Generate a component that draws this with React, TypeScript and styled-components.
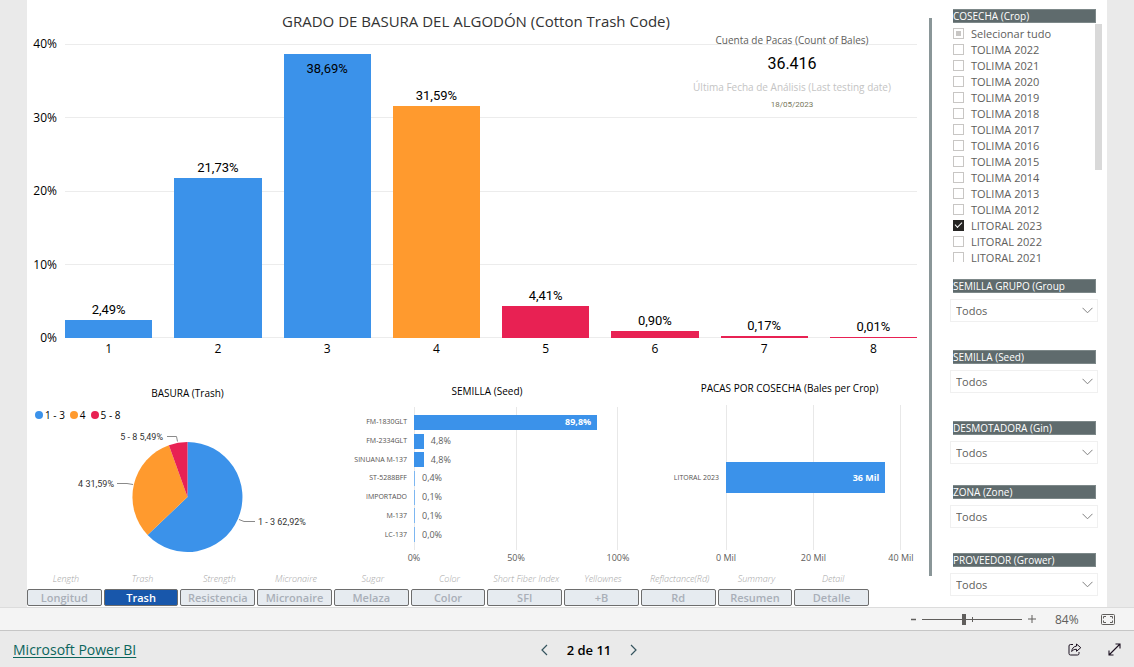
import React, { useEffect, useRef } from "react";
import styled, { createGlobalStyle, css } from "styled-components";

const ui = '"Open Sans", "Noto Sans", sans-serif';
const din = 'Roboto, "Liberation Sans", sans-serif';
const blue = "#3b92ea";
const orange = "#ff9a2e";
const red = "#e82153";

const GlobalStyle = createGlobalStyle`
  *, *::before, *::after { box-sizing: border-box; }
  body { margin: 0; background: #eaeaea; font-family: ${ui}; font-size: 11px; color: #000; }
  button, input, select { font: inherit; margin: 0; }
  h1, h2, p, ul { margin: 0; padding: 0; font-weight: 400; }
`;

const Shell = styled.div`
  display: flex;
  flex-direction: column;
  min-height: 100vh;
`;

const Report = styled.main`
  display: flex;
  flex: 1;
  margin: 0 27px;
  background: #fff;
`;

const Charts = styled.div`
  position: relative;
  display: flex;
  flex: 1;
  flex-direction: column;
  min-width: 0;
`;

const Divider = styled.div`
  width: 3px;
  margin: 18px 18px 31px 4px;
  background: #8a9698;
`;

const Title = styled.h1`
  height: 44px;
  padding-top: 11px;
  font-size: 15px;
  line-height: 20px;
  text-align: center;
  color: #333;
`;

const ColumnChart = styled.section`
  display: grid;
  grid-template-columns: 30px 1fr;
  column-gap: 8px;
  margin-right: 8px;
`;

const YAxis = styled.div`
  display: flex;
  flex-direction: column;
  justify-content: space-between;
  height: 310px;
  margin: -8px 0;
  font-size: 12px;
  line-height: 16px;
  text-align: right;
`;

const Plot = styled.div`
  display: grid;
  height: 294px;
`;

const GridRows = styled.div`
  display: flex;
  flex-direction: column;
  justify-content: space-between;
  grid-area: 1 / 1;

  i { height: 1px; background: #ececec; }
`;

const Columns = styled.div`
  display: grid;
  grid-area: 1 / 1;
  grid-template-columns: repeat(8, 1fr);
  column-gap: 22px;
`;

const Column = styled.div`
  display: flex;
  flex-direction: column;
  justify-content: flex-end;
  height: 294px;
  text-align: center;
`;

const ColumnValue = styled.span`
  font-family: ${din};
  font-size: 13px;
  line-height: 16px;
  padding-bottom: 2px;
`;

const ColumnBar = styled.div<{ $color: string; $inside?: boolean; $min: number }>`
  flex: none;
  min-height: ${(p) => p.$min}px;
  padding-top: ${(p) => (p.$inside ? 7 : 0)}px;
  background: ${(p) => p.$color};
`;

const Categories = styled(Columns)`
  grid-area: 2 / 2;
  font-size: 12px;
  line-height: 16px;
  padding-top: 3px;
  text-align: center;
`;

const Summary = styled.section`
  position: absolute;
  top: 32px;
  right: 33px;
  width: 200px;
  text-align: center;
`;

const SummaryLabel = styled.p<{ $faint?: boolean }>`
  font-size: 10px;
  line-height: 16px;
  color: ${(p) => (p.$faint ? "#c4c4c4" : "#605e5c")};
`;

const SummaryCount = styled.p`
  padding: 5px 0;
  font-family: ${din};
  font-size: 16px;
  line-height: 21px;
  color: #000;
`;

const SummaryDate = styled.p`
  padding-top: 2px;
  font-family: ${din};
  font-size: 8px;
  line-height: 16px;
  color: #77775a;
`;

const LowerRow = styled.div`
  display: grid;
  grid-template-columns: 321fr 264fr 313fr;
  margin-top: 24px;
`;

const Panel = styled.section`
  min-width: 0;
`;

const PanelTitle = styled.h2<{ $top: number; $left?: number }>`
  padding-top: ${(p) => p.$top}px;
  padding-left: ${(p) => p.$left ?? 0}px;
  font-size: 10px;
  line-height: 14px;
  text-align: center;
`;

const Legend = styled.ul`
  display: flex;
  gap: 5px;
  padding: 8px 8px 0;
  list-style: none;
  font-size: 10px;
  line-height: 14px;
`;

const LegendItem = styled.li<{ $color: string }>`
  display: flex;
  align-items: center;
  gap: 2px;

  &::before {
    content: "";
    width: 8px;
    height: 8px;
    border-radius: 50%;
    background: ${(p) => p.$color};
  }
`;

const Pie = styled.svg`
  display: block;
  width: 320px;
  height: 140px;

  text { font-family: ${din}; font-size: 9px; fill: #333; }
  polyline { fill: none; stroke: #8a8a8a; }
`;

const BarChart = styled.div<{ $labels: number; $gap: number; $right: number; $top: number }>`
  display: grid;
  grid-template-columns: ${(p) => p.$labels}px 1fr;
  column-gap: ${(p) => p.$gap}px;
  margin: ${(p) => p.$top}px ${(p) => p.$right}px 0 0;
`;

const RowLabels = styled.div<{ $inset: number }>`
  display: grid;
  padding: ${(p) => p.$inset}px 0;
  align-items: center;
  font-size: 7px;
  line-height: 10px;
  text-align: right;
  white-space: nowrap;
  color: #55524f;
`;

const BarPlot = styled.div<{ $height: number }>`
  display: grid;
  height: ${(p) => p.$height}px;
`;

const GridColumns = styled.div`
  display: flex;
  justify-content: space-between;
  grid-area: 1 / 1;

  i { width: 1px; background: #e8e8e8; }
`;

const Bars = styled.div<{ $inset: number }>`
  display: grid;
  grid-area: 1 / 1;
  padding: ${(p) => p.$inset}px 0;
  align-items: center;
`;

const BarRow = styled.div`
  display: flex;
  align-items: center;
  gap: 7px;
  font-size: 9px;
  line-height: 14px;
  color: #605e5c;
`;

const Bar = styled.div<{ $height: number; $faint?: boolean }>`
  display: flex;
  align-items: center;
  justify-content: flex-end;
  height: ${(p) => p.$height}px;
  min-width: 1px;
  padding-right: 6px;
  background: ${(p) => (p.$faint ? "#7db7f1" : blue)};
  font-weight: 700;
  color: #fff;
`;

const ShortBar = styled(Bar)`
  padding: 0;
`;

const XAxis = styled.div`
  display: flex;
  grid-column: 2;
  justify-content: space-between;
  margin: 0 -20px;
  padding-top: 1px;
  font-size: 9px;
  line-height: 14px;
  color: #605e5c;

  span { width: 40px; text-align: center; }
`;

const PageTabs = styled.nav`
  display: grid;
  grid-template-columns: repeat(11, 1fr);
  column-gap: 2px;
  margin: auto 56px 1px 0;
`;

const PageTab = styled.div`
  display: flex;
  flex-direction: column;
  min-width: 0;
  text-align: center;
`;

const TabHint = styled.span`
  padding: 0 0 4px 3px;
  font-size: 9px;
  font-style: italic;
  font-weight: 300;
  line-height: 12px;
  white-space: nowrap;
  color: #a5a5a5;
`;

const TabButton = styled.button<{ $active?: boolean }>`
  height: 17px;
  padding: 0;
  border: 1px solid #6d6d6d;
  border-radius: 2px;
  background: #e6ebf0;
  font-size: 11px;
  font-weight: 600;
  line-height: 15px;
  color: #a9afb8;
  ${(p) => p.$active && css`
    background: #1857ab;
    color: #fff;
  `}
`;

const Filters = styled.aside`
  width: 157px;
  padding: 9px 5px 8px 0;
`;

const FilterHeading = styled.h2`
  width: 143px;
  height: 14px;
  margin-left: 3px;
  overflow: hidden;
  border: 1px solid #7d8889;
  border-left: 0;
  background: #5f6b6d;
  font-size: 10px;
  line-height: 13px;
  white-space: nowrap;
  color: #fff;
`;

const CropList = styled.div`
  display: flex;
  justify-content: space-between;
  height: 238px;
  margin: 1px 0 17px 3px;
  overflow: hidden;
`;

const CropOptions = styled.div`
  padding-top: 1px;
`;

const ScrollThumb = styled.div`
  width: 7px;
  height: 146px;
  background: #d9d9d9;
`;

const CropOption = styled.label`
  display: flex;
  align-items: center;
  gap: 7px;
  height: 16px;
  font-size: 11px;
  white-space: nowrap;
  color: #605e5c;
`;

const Tick = styled.input`
  display: grid;
  place-items: center;
  width: 11px;
  height: 11px;
  border: 1px solid #c8c6c4;
  background: #fff;
  appearance: none;

  &:indeterminate::after {
    content: "";
    width: 5px;
    height: 5px;
    background: #c8c6c4;
  }

  &:checked { border-color: #252423; background: #252423; }

  &:checked::after {
    content: "";
    width: 7px;
    height: 4px;
    border: solid #fff;
    border-width: 0 0 1px 1px;
    transform: translateY(-1px) rotate(-45deg);
  }
`;

const Filter = styled.div<{ $gap: number }>`
  margin-bottom: ${(p) => p.$gap}px;
`;

const SelectFrame = styled.div`
  display: grid;
  align-items: center;
  width: 148px;
  margin-top: 6px;

  svg { grid-area: 1 / 1; justify-self: end; margin-right: 5px; pointer-events: none; }
`;

const Select = styled.select`
  grid-area: 1 / 1;
  width: 100%;
  height: 23px;
  padding: 0 5px;
  border: 1px solid #f0f0f0;
  border-radius: 0;
  background: #fff;
  font-size: 11px;
  color: #605e5c;
  appearance: none;
`;

const ZoomBar = styled.div`
  display: flex;
  align-items: center;
  justify-content: flex-end;
  height: 24px;
  padding-right: 19px;
  border-top: 1px solid #dcdcdc;
  border-bottom: 1px solid #c6c6c6;
  background: #f4f4f4;
  color: #605e5c;
`;

const IconButton = styled.button`
  display: grid;
  place-items: center;
  padding: 0;
  border: 0;
  background: none;
  color: inherit;
`;

const ZoomTrack = styled.div`
  display: grid;
  align-items: center;
  width: 100px;
  margin: 0 6px;

  &::before {
    content: "";
    grid-area: 1 / 1;
    justify-self: center;
    width: 1px;
    height: 5px;
    background: #605e5c;
  }
`;

const ZoomSlider = styled.input`
  grid-area: 1 / 1;
  width: 100%;
  height: 11px;
  background: linear-gradient(#605e5c, #605e5c) center / 100% 1px no-repeat;
  appearance: none;

  &::-webkit-slider-thumb {
    width: 4px;
    height: 11px;
    background: #605e5c;
    appearance: none;
  }
`;

const ZoomValue = styled.span`
  width: 24px;
  margin: 0 22px 0 19px;
  font-size: 12px;
`;

const Footer = styled.footer`
  display: grid;
  grid-template-columns: 12fr auto 11fr;
  align-items: center;
  height: 36px;
  padding: 1px 13px 0;
`;

const BrandLink = styled.a`
  justify-self: start;
  font-size: 14px;
  line-height: 18px;
  text-underline-offset: 2px;
  color: #0b655c;
`;

const Pager = styled.div`
  display: flex;
  align-items: center;
  gap: 19px;
  font-size: 13px;
  font-weight: 600;
`;

const Actions = styled.div`
  display: flex;
  gap: 26px;
  justify-content: flex-end;
`;

const columns = [
  { label: "2,49%", value: 2.49, color: blue },
  { label: "21,73%", value: 21.73, color: blue },
  { label: "38,69%", value: 38.69, color: blue, inside: true },
  { label: "31,59%", value: 31.59, color: orange },
  { label: "4,41%", value: 4.41, color: red },
  { label: "0,90%", value: 0.9, color: red },
  { label: "0,17%", value: 0.17, color: red },
  { label: "0,01%", value: 0.01, color: red },
];

const seeds = [
  { name: "FM-1830GLT", label: "89,8%", value: 89.8 },
  { name: "FM-2334GLT", label: "4,8%", value: 4.8 },
  { name: "SINUANA M-137", label: "4,8%", value: 4.8 },
  { name: "ST-5288BFF", label: "0,4%", value: 0.4 },
  { name: "IMPORTADO", label: "0,1%", value: 0.1 },
  { name: "M-137", label: "0,1%", value: 0.1 },
  { name: "LC-137", label: "0,0%", value: 0 },
];

const crops = [
  "TOLIMA 2022", "TOLIMA 2021", "TOLIMA 2020", "TOLIMA 2019", "TOLIMA 2018",
  "TOLIMA 2017", "TOLIMA 2016", "TOLIMA 2015", "TOLIMA 2014", "TOLIMA 2013",
  "TOLIMA 2012", "LITORAL 2023", "LITORAL 2022", "LITORAL 2021",
];

const filters = [
  { title: "SEMILLA GRUPO (Group", gap: 28 },
  { title: "SEMILLA (Seed)", gap: 28 },
  { title: "DESMOTADORA (Gin)", gap: 21 },
  { title: "ZONA (Zone)", gap: 25 },
  { title: "PROVEEDOR (Grower)", gap: 0 },
];

const tabs = [
  ["Length", "Longitud"], ["Trash", "Trash"], ["Strength", "Resistencia"],
  ["Micronaire", "Micronaire"], ["Sugar", "Melaza"], ["Color", "Color"],
  ["Short Fiber Index", "SFI"], ["Yellownes", "+B"], ["Reflactance(Rd)", "Rd"],
  ["Summary", "Resumen"], ["Detail", "Detalle"],
];

function TrashColumns() {
  return (
    <ColumnChart>
      <YAxis>
        {["40%", "30%", "20%", "10%", "0%"].map((t) => <span key={t}>{t}</span>)}
      </YAxis>
      <Plot>
        <GridRows><i /><i /><i /><i /><i /></GridRows>
        <Columns>
          {columns.map((c) => (
            <Column key={c.label}>
              {!c.inside && <ColumnValue>{c.label}</ColumnValue>}
              <ColumnBar
                $color={c.color}
                $inside={c.inside}
                $min={c.value > 0.1 ? 2 : 1}
                style={{ height: `${c.value / 0.4}%` }}
              >
                {c.inside && <ColumnValue>{c.label}</ColumnValue>}
              </ColumnBar>
            </Column>
          ))}
        </Columns>
      </Plot>
      <Categories>
        {columns.map((c, i) => <span key={c.label}>{i + 1}</span>)}
      </Categories>
    </ColumnChart>
  );
}

function TrashPie() {
  return (
    <Panel>
      <PanelTitle $top={5}>BASURA (Trash)</PanelTitle>
      <Legend>
        <LegendItem $color={blue}>1 - 3</LegendItem>
        <LegendItem $color={orange}>4</LegendItem>
        <LegendItem $color={red}>5 - 8</LegendItem>
      </Legend>
      <Pie viewBox="0 0 320 140">
        <path d="M160.5 75V20A55 55 0 1 1 120.6 112.9Z" fill={blue} />
        <path d="M160.5 75L120.6 112.9A55 55 0 0 1 141.9 23.2Z" fill={orange} />
        <path d="M160.5 75L141.9 23.2A55 55 0 0 1 160.5 20Z" fill={red} />
        <polyline points="140,14.5 149.5,14.5 150.5,19.5" />
        <polyline points="90,61.5 100,61.5 106,62.5" />
        <polyline points="212,97.5 217,99.5 228,99.5" />
        <text x="136" y="18" textAnchor="end">5 - 8 5,49%</text>
        <text x="87" y="65" textAnchor="end">4 31,59%</text>
        <text x="231" y="103">1 - 3 62,92%</text>
      </Pie>
    </Panel>
  );
}

function SeedBars() {
  return (
    <Panel>
      <PanelTitle $top={3} $left={14}>SEMILLA (Seed)</PanelTitle>
      <BarChart $labels={59} $gap={7} $right={-6} $top={9}>
        <RowLabels $inset={6}>
          {seeds.map((s) => <span key={s.name}>{s.name}</span>)}
        </RowLabels>
        <BarPlot $height={143}>
          <GridColumns><i /><i /><i /></GridColumns>
          <Bars $inset={6}>
            {seeds.map((s) =>
              s.value > 50 ? (
                <BarRow key={s.name}>
                  <Bar $height={15} style={{ width: `${s.value}%` }}>{s.label}</Bar>
                </BarRow>
              ) : (
                <BarRow key={s.name}>
                  <ShortBar $height={15} $faint={s.value < 1} style={{ width: `${s.value}%` }} />
                  {s.label}
                </BarRow>
              )
            )}
          </Bars>
        </BarPlot>
        <XAxis><span>0%</span><span>50%</span><span>100%</span></XAxis>
      </BarChart>
    </Panel>
  );
}

function CropBars() {
  return (
    <Panel>
      <PanelTitle $top={0} $left={42}>PACAS POR COSECHA (Bales per Crop)</PanelTitle>
      <BarChart $labels={107} $gap={7} $right={24} $top={10}>
        <RowLabels $inset={6}><span>LITORAL 2023</span></RowLabels>
        <BarPlot $height={145}>
          <GridColumns><i /><i /><i /></GridColumns>
          <Bars $inset={6}>
            <BarRow><Bar $height={31} style={{ width: "91%" }}>36 Mil</Bar></BarRow>
          </Bars>
        </BarPlot>
        <XAxis><span>0 Mil</span><span>20 Mil</span><span>40 Mil</span></XAxis>
      </BarChart>
    </Panel>
  );
}

function CropFilter() {
  const all = useRef<HTMLInputElement>(null);
  useEffect(() => {
    if (all.current) all.current.indeterminate = true;
  }, []);
  return (
    <>
      <FilterHeading>COSECHA (Crop)</FilterHeading>
      <CropList>
        <CropOptions>
          <CropOption><Tick ref={all} type="checkbox" />Selecionar tudo</CropOption>
          {crops.map((c) => (
            <CropOption key={c}>
              <Tick type="checkbox" defaultChecked={c === "LITORAL 2023"} />{c}
            </CropOption>
          ))}
        </CropOptions>
        <ScrollThumb />
      </CropList>
    </>
  );
}

export default function App() {
  return (
    <Shell>
      <GlobalStyle />
      <Report>
        <Charts>
          <Title>GRADO DE BASURA DEL ALGODÓN (Cotton Trash Code)</Title>
          <TrashColumns />
          <Summary>
            <SummaryLabel>Cuenta de Pacas (Count of Bales)</SummaryLabel>
            <SummaryCount>36.416</SummaryCount>
            <SummaryLabel $faint>Última Fecha de Análisis (Last testing date)</SummaryLabel>
            <SummaryDate>18/05/2023</SummaryDate>
          </Summary>
          <LowerRow>
            <TrashPie />
            <SeedBars />
            <CropBars />
          </LowerRow>
          <PageTabs>
            {tabs.map(([hint, name]) => (
              <PageTab key={hint}>
                <TabHint>{hint}</TabHint>
                <TabButton type="button" $active={name === "Trash"}>{name}</TabButton>
              </PageTab>
            ))}
          </PageTabs>
        </Charts>
        <Divider />
        <Filters>
          <CropFilter />
          {filters.map((f) => (
            <Filter key={f.title} $gap={f.gap}>
              <FilterHeading>{f.title}</FilterHeading>
              <SelectFrame>
                <Select aria-label={f.title}><option>Todos</option></Select>
                <svg width="11" height="7" viewBox="0 0 11 7" fill="none" stroke="#808080">
                  <path d="M.5.8 5.5 5.8 10.5.8" />
                </svg>
              </SelectFrame>
            </Filter>
          ))}
        </Filters>
      </Report>
      <ZoomBar>
        <IconButton type="button" aria-label="Zoom out">
          <svg width="5" height="11" viewBox="0 0 5 11"><path d="M0 5.5H5" stroke="currentColor" strokeWidth="1.5" /></svg>
        </IconButton>
        <ZoomTrack>
          <ZoomSlider type="range" aria-label="Zoom" min="0" max="100" defaultValue="42" />
        </ZoomTrack>
        <IconButton type="button" aria-label="Zoom in">
          <svg width="8" height="8" viewBox="0 0 8 8"><path d="M0 4H8M4 0V8" stroke="currentColor" /></svg>
        </IconButton>
        <ZoomValue>84%</ZoomValue>
        <IconButton type="button" aria-label="Fit to page">
          <svg width="14" height="11" viewBox="0 0 14 11" fill="none" stroke="currentColor">
            <rect x=".5" y=".5" width="13" height="10" rx="1" />
            <path d="M5 2.5H2.5V4.5M9 2.5H11.5V4.5M5 8.5H2.5V6.5M9 8.5H11.5V6.5" />
          </svg>
        </IconButton>
      </ZoomBar>
      <Footer>
        <BrandLink href="#">Microsoft Power BI</BrandLink>
        <Pager>
          <IconButton type="button" aria-label="Previous page">
            <svg width="7" height="12" viewBox="0 0 7 12" fill="none" stroke="#35555f" strokeWidth="1.2"><path d="M6 1 1 6 6 11" /></svg>
          </IconButton>
          <span>2 de 11</span>
          <IconButton type="button" aria-label="Next page">
            <svg width="7" height="12" viewBox="0 0 7 12" fill="none" stroke="#35555f" strokeWidth="1.2"><path d="M1 1 6 6 1 11" /></svg>
          </IconButton>
        </Pager>
        <Actions>
          <IconButton type="button" aria-label="Share">
            <svg width="14" height="13" viewBox="0 0 14 13" fill="none" stroke="#1b1020" strokeLinejoin="round">
              <path d="M5 1.5H2.5A1.5 1.5 0 0 0 1 3V10.5A1.5 1.5 0 0 0 2.5 12H9.5A1.5 1.5 0 0 0 11 10.5V9" />
              <path d="M8.5 1 12.8 4.7 8.5 8.3V6.3C6.2 6.3 4.7 7 3.7 8.5 4 5.5 5.6 3.4 8.5 3.1Z" />
            </svg>
          </IconButton>
          <IconButton type="button" aria-label="Full screen">
            <svg width="13" height="13" viewBox="0 0 13 13" fill="none" stroke="#1b1020" strokeWidth="1.1">
              <path d="M1 12 12 1M7.5 1H12V5.5M1 7.5V12H5.5" />
            </svg>
          </IconButton>
        </Actions>
      </Footer>
    </Shell>
  );
}
